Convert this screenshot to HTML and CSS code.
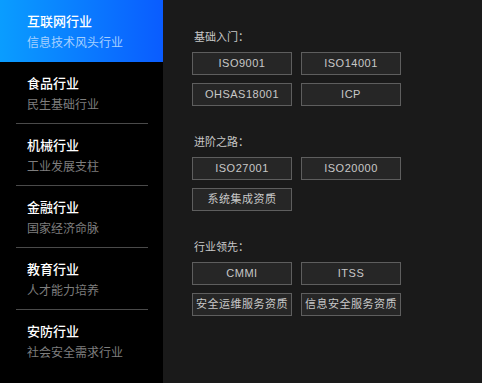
FILE: index.html
```html
<!DOCTYPE html>
<html>
<head>
	<title>行业资质</title>
	<meta http-equiv="content-type" content="text/html; charset=utf-8">
	<link rel="stylesheet" href="styles.css">
</head>
<body>
	<div class="page">
		<div class="side">
			<div class="item active">
				<div class="inner">
					<div class="title">互联网行业</div>
					<div class="sub">信息技术风头行业</div>
				</div>
			</div>
			<div class="item">
				<div class="inner">
					<div class="title">食品行业</div>
					<div class="sub">民生基础行业</div>
				</div>
			</div>
			<div class="item">
				<div class="inner">
					<div class="title">机械行业</div>
					<div class="sub">工业发展支柱</div>
				</div>
			</div>
			<div class="item">
				<div class="inner">
					<div class="title">金融行业</div>
					<div class="sub">国家经济命脉</div>
				</div>
			</div>
			<div class="item">
				<div class="inner">
					<div class="title">教育行业</div>
					<div class="sub">人才能力培养</div>
				</div>
			</div>
			<div class="item last">
				<div class="inner">
					<div class="title">安防行业</div>
					<div class="sub">社会安全需求行业</div>
				</div>
			</div>
		</div>
		<div class="main">
			<div class="group">
				<div class="label">基础入门：</div>
				<div class="btns">
					<span class="btn">ISO9001</span>
					<span class="btn">ISO14001</span>
					<span class="btn">OHSAS18001</span>
					<span class="btn">ICP</span>
				</div>
			</div>
			<div class="group">
				<div class="label">进阶之路：</div>
				<div class="btns">
					<span class="btn">ISO27001</span>
					<span class="btn">ISO20000</span>
					<span class="btn">系统集成资质</span>
				</div>
			</div>
			<div class="group">
				<div class="label">行业领先：</div>
				<div class="btns">
					<span class="btn">CMMI</span>
					<span class="btn">ITSS</span>
					<span class="btn">安全运维服务资质</span>
					<span class="btn">信息安全服务资质</span>
				</div>
			</div>
		</div>
	</div>
</body>
</html>
```

FILE: styles.css
```css
html, body{
	margin:0;
	padding:0;
	height:100%;
	background:#1a1a1a;
	font-family:"Liberation Sans", "Noto Sans CJK SC", sans-serif;
}
.page{
	display:flex;
	height:100%;
}
.side{
	width:163px;
	flex-shrink:0;
	background:#000;
}
.item{
	padding:0 15px 0 16px;
}
.item .inner{
	padding:12px 0 9px 11px;
	border-bottom:1px solid #4a4a4a;
}
.item.active{
	background:linear-gradient(90deg, #0a9dff, #0a5cff);
}
.item.active .inner,
.item.last .inner{
	border-bottom-color:transparent;
}
.title{
	font-size:13px;
	line-height:18px;
	font-weight:500;
	color:#fff;
	font-family:"Noto Sans CJK SC", sans-serif;
}
.sub{
	margin-top:2px;
	font-size:12px;
	line-height:20px;
	color:#7e7e7e;
	font-family:"Noto Sans CJK SC", sans-serif;
}
.item.active .sub{
	color:#a6d0ff;
}
.main{
	flex:1;
	padding:28px 0 0 29px;
}
.group{
	margin-bottom:27px;
}
.label{
	font-size:11px;
	line-height:16px;
	color:#c8c8c8;
	margin-bottom:8px;
	padding-left:2px;
	font-family:"Noto Sans CJK SC", sans-serif;
}
.btns{
	display:grid;
	grid-template-columns:100px 100px;
	column-gap:9px;
	row-gap:8px;
}
.btn{
	box-sizing:border-box;
	height:23px;
	line-height:21px;
	border:1px solid #5e5e5e;
	background:#262626;
	color:#c8c8c8;
	font-size:11px;
	letter-spacing:0.5px;
	text-align:center;
	white-space:nowrap;
	font-family:"Liberation Sans", "Noto Sans CJK SC", sans-serif;
}
```
